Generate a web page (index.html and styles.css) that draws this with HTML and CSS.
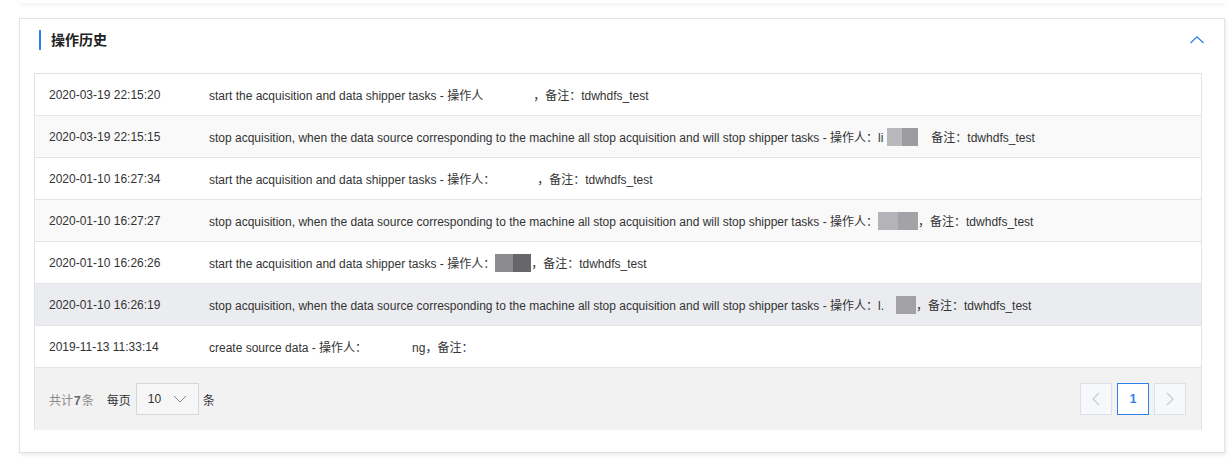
FILE: index.html
```html
<!DOCTYPE html>
<html lang="zh-CN">
<head>
<meta charset="utf-8">
<title>操作历史</title>
<link rel="stylesheet" href="styles.css">
</head>
<body>
<div class="prev-card"></div>
<section class="card">
  <header class="card-head">
    <h2 class="title">操作历史</h2>
    <svg class="chevron" width="16" height="10" viewBox="0 0 16 10"><path d="M1.5 8 L8 1.8 L14.5 8" fill="none" stroke="#2f7ff0" stroke-width="1.3"/></svg>
  </header>
  <div class="table">
    <div class="row">
      <span class="time">2020-03-19 22:15:20</span>
      <span class="msg">start the acquisition and data shipper tasks - 操作人<span class="gap w50"></span>，备注：tdwhdfs_test</span>
    </div>
    <div class="row alt">
      <span class="time">2020-03-19 22:15:15</span>
      <span class="msg">stop acquisition, when the data source corresponding to the machine all stop acquisition and will stop shipper tasks - 操作人：li<span class="blob b1a"></span><span class="blob b1b"></span><span class="gap w13"></span>备注：tdwhdfs_test</span>
    </div>
    <div class="row">
      <span class="time">2020-01-10 16:27:34</span>
      <span class="msg">start the acquisition and data shipper tasks - 操作人：<span class="gap w42"></span>，备注：tdwhdfs_test</span>
    </div>
    <div class="row alt">
      <span class="time">2020-01-10 16:27:27</span>
      <span class="msg">stop acquisition, when the data source corresponding to the machine all stop acquisition and will stop shipper tasks - 操作人：<span class="blob b2a"></span><span class="blob b2b"></span>，备注：tdwhdfs_test</span>
    </div>
    <div class="row">
      <span class="time">2020-01-10 16:26:26</span>
      <span class="msg">start the acquisition and data shipper tasks - 操作人：<span class="blob b3a"></span><span class="blob b3b"></span>，备注：tdwhdfs_test</span>
    </div>
    <div class="row hover">
      <span class="time">2020-01-10 16:26:19</span>
      <span class="msg">stop acquisition, when the data source corresponding to the machine all stop acquisition and will stop shipper tasks - 操作人：l.<span class="gap w12"></span><span class="blob b4"></span>，备注：tdwhdfs_test</span>
    </div>
    <div class="row">
      <span class="time">2019-11-13 11:33:14</span>
      <span class="msg">create source data - 操作人：<span class="gap w45"></span>ng，备注：</span>
    </div>
    <div class="pager">
      <div class="pager-left">
        <span class="total">共计<b>7</b>条</span>
        <span class="per">每页</span>
        <div class="select">
          <span>10</span>
          <svg width="14" height="8" viewBox="0 0 14 8"><path d="M1 1 L7 7 L13 1" fill="none" stroke="#888" stroke-width="1"/></svg>
        </div>
        <span class="per">条</span>
      </div>
      <div class="pager-right">
        <button class="pbtn disabled"><svg width="8" height="14" viewBox="0 0 8 14"><path d="M7 1 L1 7 L7 13" fill="none" stroke="#c5cad3" stroke-width="1.2"/></svg></button>
        <button class="pbtn active">1</button>
        <button class="pbtn disabled"><svg width="8" height="14" viewBox="0 0 8 14"><path d="M1 1 L7 7 L1 13" fill="none" stroke="#c5cad3" stroke-width="1.2"/></svg></button>
      </div>
    </div>
  </div>
</section>
</body>
</html>
```
FILE: styles.css
```css
* { box-sizing: border-box; }
html, body { margin: 0; padding: 0; background: #fff; }
body {
  font-family: "Liberation Sans", "Noto Sans CJK SC", sans-serif;
  font-size: 12px;
  color: #333;
  width: 1228px;
  height: 461px;
  overflow: hidden;
}
.prev-card {
  height: 3px;
  margin: 0 3px 15px 20px;
  box-shadow: 0 2px 4px rgba(0,0,0,0.08);
  background: #fff;
}
.card {
  margin-left: 19px;
  width: 1206px;
  height: 435px;
  border: 1px solid #dfe3ea;
  box-shadow: 1px 2px 4px rgba(0,0,0,0.08);
  background: #fff;
  padding: 10px 0 0 14px;
}
.card-head {
  display: flex;
  align-items: center;
  justify-content: space-between;
  height: 21px;
  padding-right: 19px;
  margin-bottom: 23px;
}
.title {
  margin: 0;
  font-size: 14px;
  font-weight: bold;
  color: #222;
  border-left: 2px solid #2f7ff0;
  padding-left: 10px;
  line-height: 20px;
  margin-left: 5px;
}
.chevron { display: block; margin-top: 1px; }
.table {
  width: 1168px;
  border: 1px solid #e1e3e7;
  border-bottom: none;
}
.row {
  display: flex;
  align-items: center;
  height: 42px;
  border-bottom: 1px solid #e5e5e5;
  background: #fff;
  color: #333;
}
.row.alt { background: #f9f9f9; }
.row.hover { background: #ebecf0; }
.time { width: 174px; padding-left: 14px; flex: none; }
.msg { white-space: nowrap; display: flex; align-items: center; }
.gap { display: inline-block; height: 12px; }
.w50 { width: 50px; }
.w42 { width: 42px; }
.w45 { width: 45px; }
.w13 { width: 13px; }
.w12 { width: 12px; }
.blob { display: inline-block; height: 18px; }
.b1a { width: 15px; background: #b9b9bc; margin-left: 4px; }
.b1b { width: 16px; background: #9c9ca0; }
.b2a { width: 20px; background: #b4b4b8; }
.b2b { width: 20px; background: #a3a3a7; }
.b3a { width: 18px; background: #8c8c90; }
.b3b { width: 18px; background: #66666b; }
.b4 { width: 20px; background: #a2a2a6; }
.pager {
  display: flex;
  justify-content: space-between;
  align-items: center;
  height: 62px;
  background: #f2f2f2;
  padding: 0 15px 0 14px;
}
.pager-left { display: flex; align-items: center; color: #444; }
.total { color: #888; margin-right: 13px; }
.total b { font-weight: bold; color: #666; margin: 0 1px; }
.per { color: #333; }
.select {
  display: flex;
  align-items: center;
  justify-content: space-between;
  width: 63px;
  height: 32px;
  border: 1px solid #d3d6dc;
  background: #f6f6f6;
  margin: 0 4px 0 5px;
  padding: 0 11px 0 11px;
  color: #333;
}
.pager-right { display: flex; gap: 5px; }
.pbtn {
  width: 32px;
  height: 32px;
  border: 1px solid #dcdfe5;
  background: #f7f8fb;
  display: flex;
  align-items: center;
  justify-content: center;
  padding: 0;
  font-family: inherit;
  font-size: 12px;
}
.pbtn.active {
  border-color: #2f7ff0;
  background: #fff;
  color: #2f7ff0;
  font-weight: bold;
}
```
